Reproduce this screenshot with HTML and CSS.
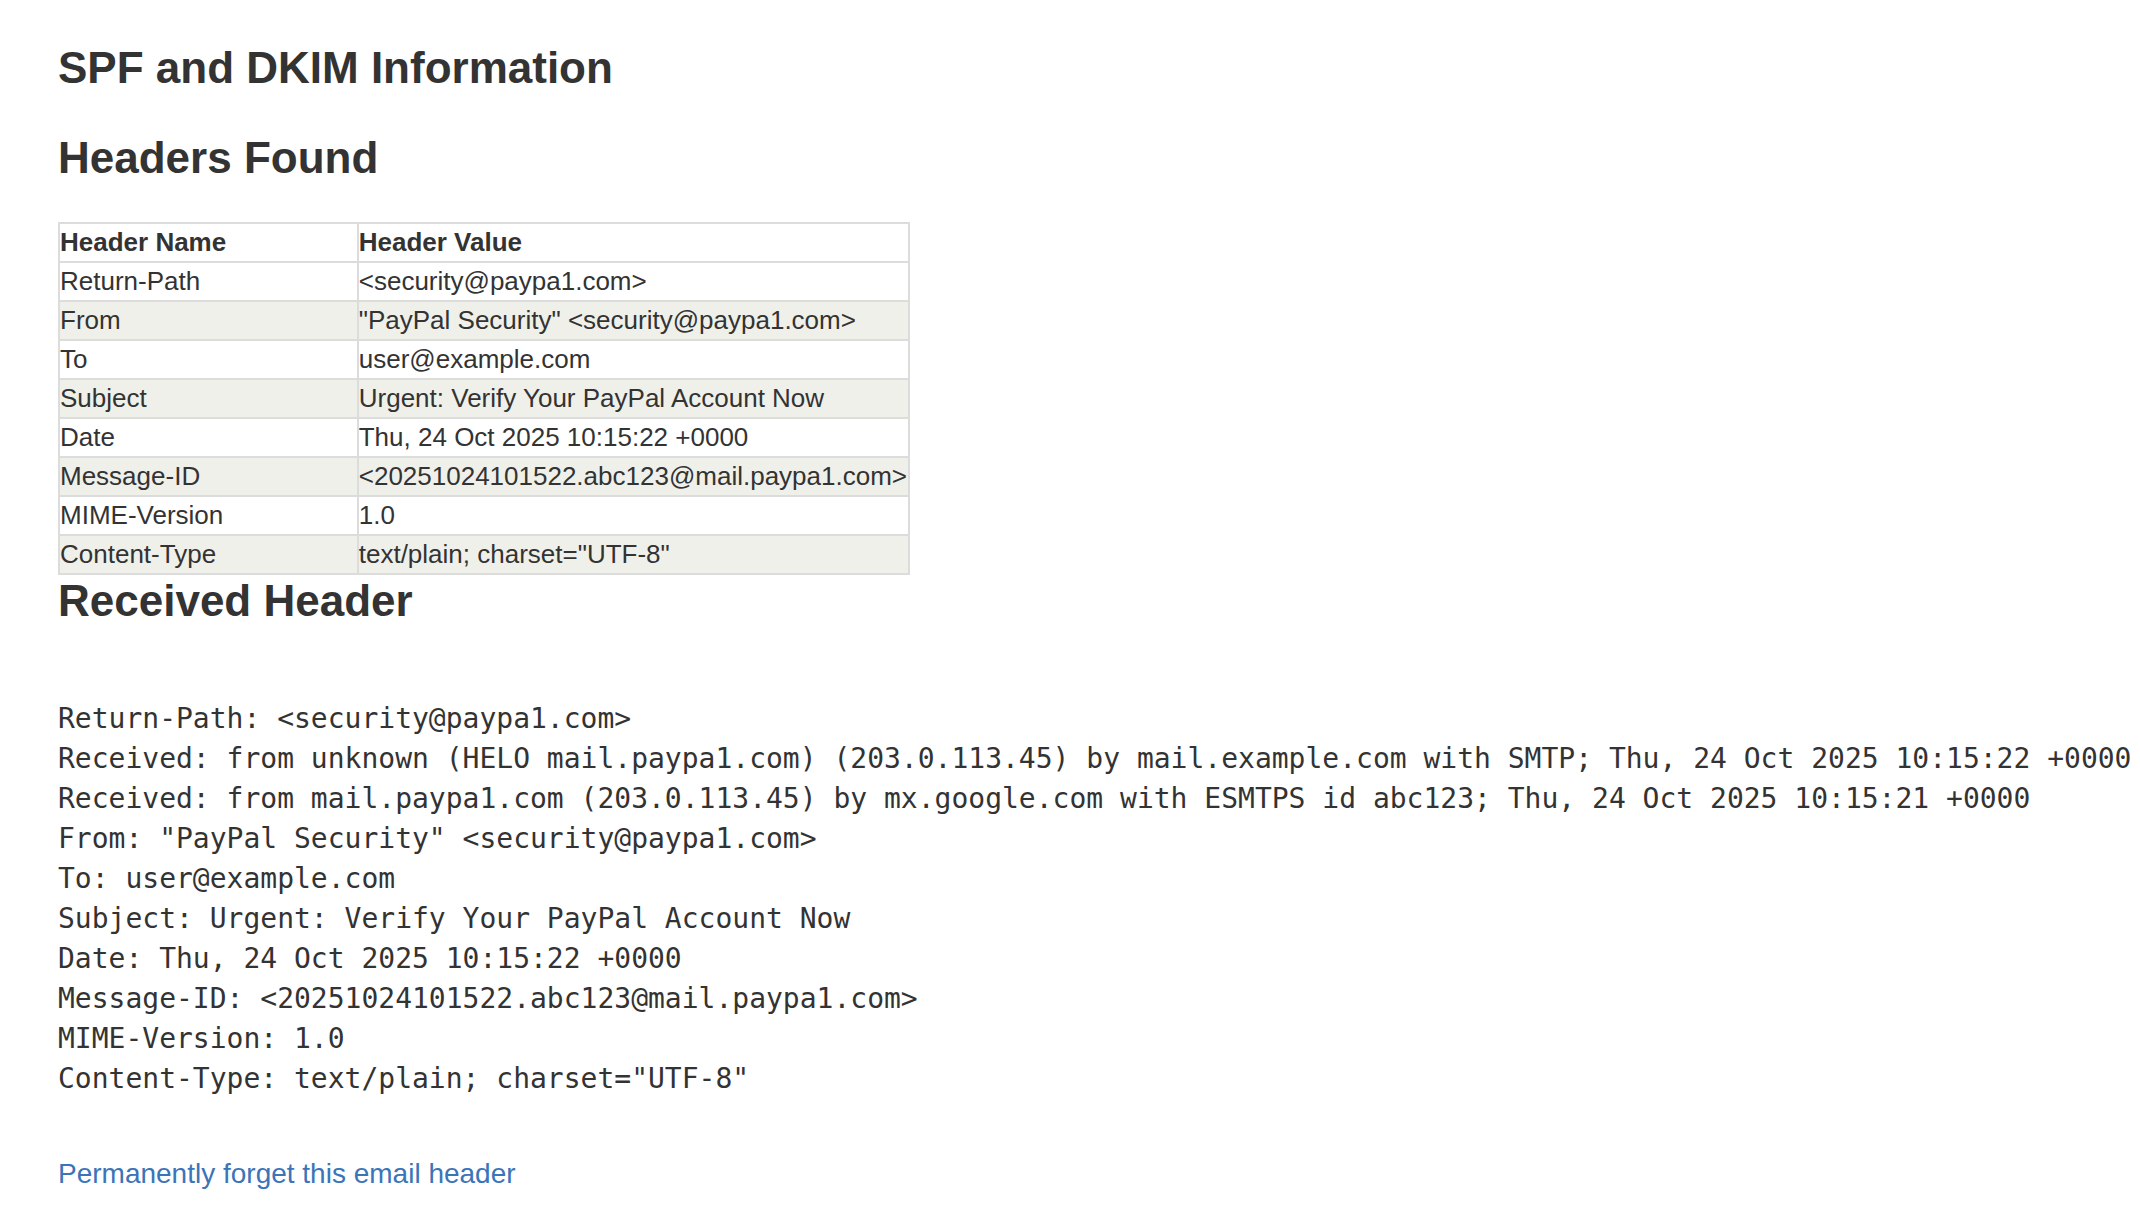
FILE: index.html
```html
<!DOCTYPE html>
<html lang="en">
<head>
<meta charset="utf-8">
<title>SPF and DKIM Information</title>
<link rel="stylesheet" href="styles.css">
</head>
<body>
<main class="page">
  <h1 class="title">SPF and DKIM Information</h1>
  <h2 class="section">Headers Found</h2>
  <table class="headers">
    <thead>
      <tr><th class="col-name">Header Name</th><th>Header Value</th></tr>
    </thead>
    <tbody>
      <tr><td>Return-Path</td><td>&lt;security@paypa1.com&gt;</td></tr>
      <tr><td>From</td><td>"PayPal Security" &lt;security@paypa1.com&gt;</td></tr>
      <tr><td>To</td><td>user@example.com</td></tr>
      <tr><td>Subject</td><td>Urgent: Verify Your PayPal Account Now</td></tr>
      <tr><td>Date</td><td>Thu, 24 Oct 2025 10:15:22 +0000</td></tr>
      <tr><td>Message-ID</td><td>&lt;20251024101522.abc123@mail.paypa1.com&gt;</td></tr>
      <tr><td>MIME-Version</td><td>1.0</td></tr>
      <tr><td>Content-Type</td><td>text/plain; charset="UTF-8"</td></tr>
    </tbody>
  </table>
  <h2 class="section section-tight">Received Header</h2>
  <pre class="raw">Return-Path: &lt;security@paypa1.com&gt;
Received: from unknown (HELO mail.paypa1.com) (203.0.113.45) by mail.example.com with SMTP; Thu, 24 Oct 2025 10:15:22 +0000
Received: from mail.paypa1.com (203.0.113.45) by mx.google.com with ESMTPS id abc123; Thu, 24 Oct 2025 10:15:21 +0000
From: "PayPal Security" &lt;security@paypa1.com&gt;
To: user@example.com
Subject: Urgent: Verify Your PayPal Account Now
Date: Thu, 24 Oct 2025 10:15:22 +0000
Message-ID: &lt;20251024101522.abc123@mail.paypa1.com&gt;
MIME-Version: 1.0
Content-Type: text/plain; charset="UTF-8"</pre>
  <p class="actions"><a class="forget" href="#">Permanently forget this email header</a></p>
</main>
</body>
</html>
```

FILE: styles.css
```css
html, body {
  margin: 0;
  padding: 0;
  background: #ffffff;
}

body {
  font-family: "Liberation Sans", Arial, Helvetica, sans-serif;
  color: #333333;
}

.page {
  padding: 42px 0 0 58px;
}

.title,
.section {
  font-size: 44px;
  font-weight: bold;
  line-height: 52.8px;
  margin: 0;
  color: #333333;
}

.title {
  margin-bottom: 37px;
}

.section {
  margin-bottom: 37px;
}

.section-tight {
  margin-bottom: 72px;
}

.headers {
  border-collapse: collapse;
  width: 852px;
  font-size: 26px;
  line-height: 35px;
  color: #333333;
}

.headers th,
.headers td {
  border: 2px solid #dcdcdc;
  padding: 1px 1px 1px 0;
  text-align: left;
  vertical-align: middle;
  white-space: nowrap;
}

.headers th {
  font-weight: bold;
}

.headers .col-name {
  width: 298px;
}

.headers tbody tr:nth-child(even) td {
  background: #f0f0ea;
}

.raw {
  margin: 0;
  font-family: "DejaVu Sans Mono", "Liberation Mono", monospace;
  font-size: 28px;
  line-height: 40px;
  color: #333333;
  white-space: pre;
}

.actions {
  margin: 58px 0 0 0;
  font-size: 28px;
  line-height: 33.6px;
}

.forget {
  color: #3b74b8;
  text-decoration: none;
}
```
